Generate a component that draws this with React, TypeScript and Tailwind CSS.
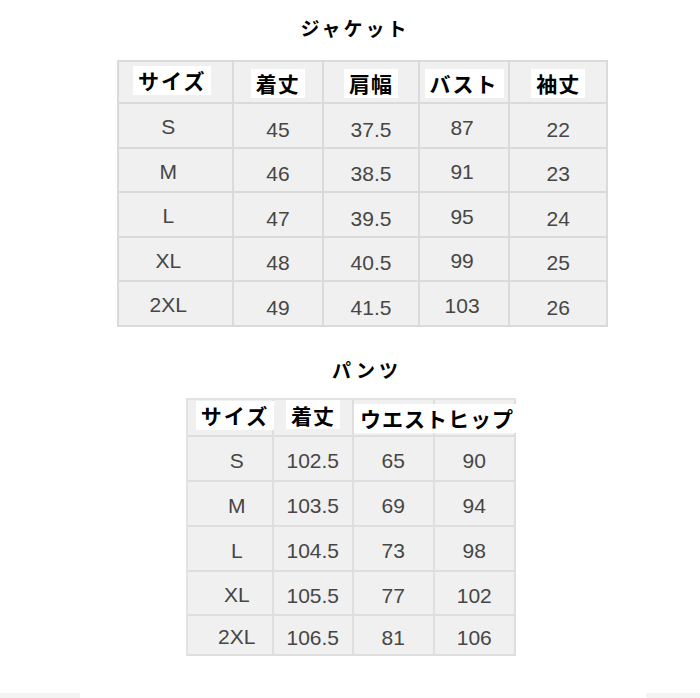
import React from 'react';

const jp = { fontFamily: '"Noto Sans CJK JP", "Noto Sans", sans-serif' };
const num = { fontFamily: '"Liberation Sans", Arial, sans-serif' };

const jacketCols = ['w-[115px]', 'w-[91px]', 'w-[96px]', 'w-[91px]', 'w-[98px]'];
const jacketHead = ['サイズ', '着丈', '肩幅', 'バスト', '袖丈'];
const jacketRows = [
  ['S', '45', '37.5', '87', '22'],
  ['M', '46', '38.5', '91', '23'],
  ['L', '47', '39.5', '95', '24'],
  ['XL', '48', '40.5', '99', '25'],
  ['2XL', '49', '41.5', '103', '26'],
];

const pantsCols = ['w-[86px]', 'w-[81px]', 'w-[81px]', 'w-[82px]'];
const pantsRows = [
  ['S', '102.5', '65', '90'],
  ['M', '103.5', '69', '94'],
  ['L', '104.5', '73', '98'],
  ['XL', '105.5', '77', '102'],
  ['2XL', '106.5', '81', '106'],
];
const pantsHeights = ['h-[45px]', 'h-[45px]', 'h-[45px]', 'h-[44px]', 'h-[40px] border-b-0'];

function Label({ text, className = '' }: { text: string; className?: string }) {
  return (
    <span
      style={jp}
      className={`relative z-10 inline-block h-[29px] whitespace-nowrap bg-white px-[5px] text-[21px] font-bold leading-[29px] tracking-[1px] text-black ${className}`}
    >
      {text}
    </span>
  );
}

function JacketTable() {
  return (
    <div className="ml-[117px] flex w-[491px] flex-col border-l-2 border-t-2 border-[#dadada] bg-[#f0f0f0]">
      <div className="flex h-[42px]">
        {jacketHead.map((h, i) => (
          <div
            key={h}
            className={`${jacketCols[i]} flex items-center justify-center border-b-2 border-r-2 border-[#dadada]`}
          >
            <Label text={h} className={i === 0 ? 'mb-[3px] mr-[6px] tracking-[2px]' : i === 3 ? 'mt-[3px] tracking-[2px]' : 'mt-[3px]'} />
          </div>
        ))}
      </div>
      {jacketRows.map((row) => (
        <div key={row[0]} className="flex h-[44.6px]">
          {row.map((v, i) => (
            <div
              key={i}
              style={num}
              className={`${jacketCols[i]} flex items-center justify-center border-b-2 border-r-2 border-[#dadada] text-[21px] text-[#464646] ${
                i === 0 ? 'pt-[3px] pr-[14px]' : i === 3 ? 'pt-[4px] pr-[4px]' : 'pt-[8px]'
              }`}
            >
              {v}
            </div>
          ))}
        </div>
      ))}
    </div>
  );
}

function PantsTable() {
  return (
    <div className="ml-[186px] flex w-[330px] flex-col border-l-2 border-t-2 border-[#e2e2e2] bg-[#f0f0f0]">
      <div className="flex h-[37px]">
        <div className={`${pantsCols[0]} flex items-center justify-center border-b-2 border-r-2 border-[#dedede] pl-[10px]`}>
          <Label text="サイズ" className="mb-[3px] tracking-[2px]" />
        </div>
        <div className={`${pantsCols[1]} flex items-center justify-center border-b-2 border-r-2 border-[#dedede]`}>
          <Label text="着丈" className="mb-[5px] pt-[1px]" />
        </div>
        <div className={`${pantsCols[2]} flex items-center border-b-2 border-r-2 border-[#dedede]`}>
          <Label text="ウエストヒップ" className="mt-[3px] pl-[6px] pr-[2px]" />
        </div>
        <div className={`${pantsCols[3]} border-b-2 border-r-2 border-[#dedede]`} />
      </div>
      {pantsRows.map((row, r) => (
        <div key={row[0]} className={`flex ${pantsHeights[r]}`}>
          {row.map((v, i) => (
            <div
              key={i}
              style={num}
              className={`${pantsCols[i]} flex items-center justify-center border-b-2 border-r-2 border-[#dedede] text-[21px] text-[#464646] ${
                i === 0 ? 'pt-[4px] pl-[14px]' : 'pt-[5px]'
              }`}
            >
              {v}
            </div>
          ))}
        </div>
      ))}
    </div>
  );
}

export default function App() {
  return (
    <div className="flex h-[698px] w-[700px] flex-col bg-white">
      <h2
        style={jp}
        className="mt-[16px] h-[24px] pl-[10px] text-center text-[19px] font-bold leading-[24px] tracking-[3px] text-black"
      >
        ジャケット
      </h2>
      <div className="mt-[20px]">
        <JacketTable />
      </div>
      <h2
        style={jp}
        className="mt-[31px] h-[24px] pl-[34px] text-center text-[19px] font-bold leading-[24px] tracking-[4px] text-black"
      >
        パンツ
      </h2>
      <div className="mt-[16px]">
        <PantsTable />
      </div>
      <div className="mt-auto flex justify-between">
        <div className="h-[5px] w-[80px] bg-[#f3f3f3]" />
        <div className="h-[5px] w-[54px] bg-[#f3f3f3]" />
      </div>
    </div>
  );
}
